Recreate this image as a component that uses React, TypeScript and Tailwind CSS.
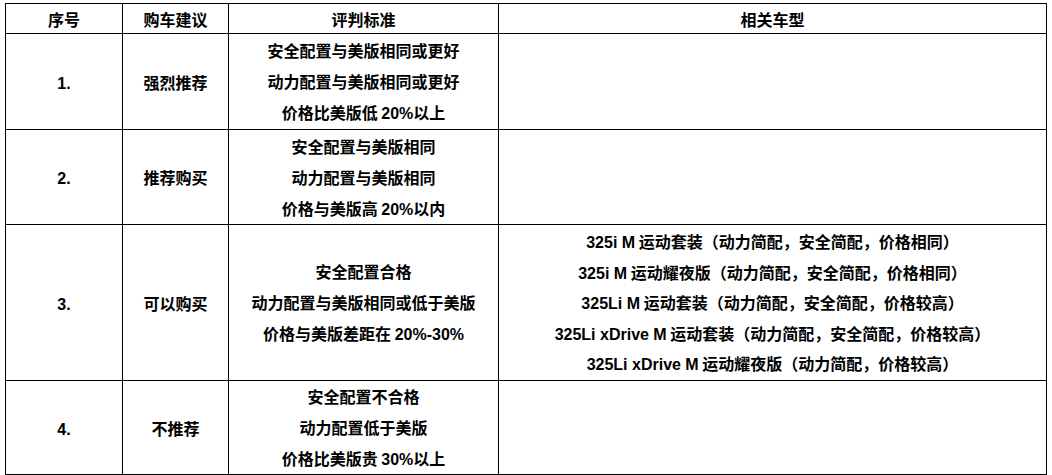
import React from "react";

interface Row {
  no: string;
  advice: string;
  criteria: React.ReactNode[];
  models: React.ReactNode[];
  height: string;
}

const L = ({ children }: { children: React.ReactNode }) => (
  <span className="font-['Liberation_Sans'] font-bold leading-none">{children}</span>
);

const rows: Row[] = [
  {
    no: "1.",
    advice: "强烈推荐",
    criteria: [
      "安全配置与美版相同或更好",
      "动力配置与美版相同或更好",
      <>价格比美版低 <L>20%</L>以上</>,
    ],
    models: [],
    height: "h-[96px]",
  },
  {
    no: "2.",
    advice: "推荐购买",
    criteria: [
      "安全配置与美版相同",
      "动力配置与美版相同",
      <>价格与美版高 <L>20%</L>以内</>,
    ],
    models: [],
    height: "h-[95px]",
  },
  {
    no: "3.",
    advice: "可以购买",
    criteria: [
      "安全配置合格",
      "动力配置与美版相同或低于美版",
      <>价格与美版差距在 <L>20%-30%</L></>,
    ],
    models: [
      <><L>325i M</L> 运动套装（动力简配，安全简配，价格相同）</>,
      <><L>325i M</L> 运动耀夜版（动力简配，安全简配，价格相同）</>,
      <><L>325Li M</L> 运动套装（动力简配，安全简配，价格较高）</>,
      <><L>325Li xDrive M</L> 运动套装（动力简配，安全简配，价格较高）</>,
      <><L>325Li xDrive M</L> 运动耀夜版（动力简配，价格较高）</>,
    ],
    height: "h-[156px]",
  },
  {
    no: "4.",
    advice: "不推荐",
    criteria: [
      "安全配置不合格",
      "动力配置低于美版",
      <>价格比美版贵 <L>30%</L>以上</>,
    ],
    models: [],
    height: "h-[94px]",
  },
];

export default function App() {
  return (
    <div className="w-[1052px] h-[475px] overflow-hidden bg-white pt-[3px] pl-[5px] font-['Noto_Sans_CJK_SC',sans-serif] text-[16px] text-black">
      <table className="w-[1041px] table-fixed border-collapse border border-black text-center">
        <colgroup>
          <col className="w-[117px]" />
          <col className="w-[106px]" />
          <col className="w-[270px]" />
          <col className="w-[548px]" />
        </colgroup>
        <thead>
          <tr className="h-[30px]">
            {["序号", "购车建议", "评判标准", "相关车型"].map((h) => (
              <th key={h} className="border border-black p-0 font-bold leading-[20px]">
                {h}
              </th>
            ))}
          </tr>
        </thead>
        <tbody>
          {rows.map((r) => (
            <tr key={r.no} className={r.height}>
              <td className="border border-black p-0 leading-[20px]">
                <L>{r.no}</L>
              </td>
              <td className="border border-black p-0 font-bold leading-[20px]">{r.advice}</td>
              <td className="border border-black p-0 font-bold leading-[31px]">
                {r.criteria.map((c, i) => (
                  <div key={i}>{c}</div>
                ))}
              </td>
              <td className="border border-black p-0 font-bold leading-[30.5px]">
                {r.models.map((m, i) => (
                  <div key={i}>{m}</div>
                ))}
              </td>
            </tr>
          ))}
        </tbody>
      </table>
    </div>
  );
}
